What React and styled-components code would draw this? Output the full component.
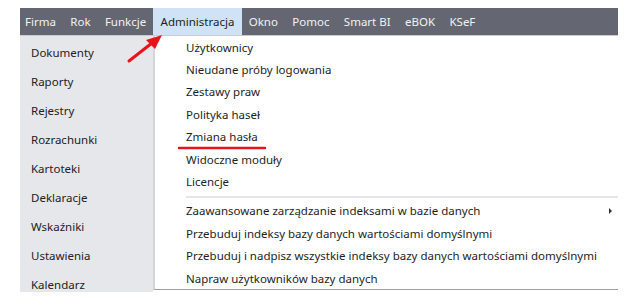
import styled, { createGlobalStyle } from 'styled-components';

const GlobalStyle = createGlobalStyle`
  body {
    margin: 0;
    background: #fff;
    font-family: 'Noto Sans', 'Open Sans', sans-serif;
  }
`;

const Page = styled.div`
  position: relative;
  width: 638px;
  height: 307px;
  padding: 8px 20px 0 20px;
  box-sizing: border-box;
`;

const MenuBar = styled.div`
  display: flex;
  height: 27px;
  background: #646771;
  border-bottom: 1px solid #c9cbd0;
`;

const MenuItem = styled.div`
  display: flex;
  align-items: center;
  padding: 0 7.2px;
  font-size: 11.5px;
  color: ${(p) => (p.$active ? '#1e1e1e' : '#f2f2f2')};
  background: ${(p) => (p.$active ? '#cfe2f6' : 'transparent')};
  &:first-child {
    padding-left: 5px;
  }
`;

const Body = styled.div`
  display: flex;
  align-items: flex-start;
`;

const Sidebar = styled.div`
  width: 133px;
  height: 256px;
  background: #e6e7eb;
  padding-top: 2px;
  box-sizing: border-box;
`;

const SideItem = styled.div`
  height: 29px;
  display: flex;
  align-items: center;
  padding-left: 11px;
  font-size: 11.5px;
  color: #222;
`;

const Dropdown = styled.div`
  flex: 1;
  background: #fff;
  border-left: 2px solid #d4d5d9;
  border-bottom: 1px solid #a0a0a0;
  padding: 0 0 0 31px;
  height: 254px;
  box-sizing: border-box;
`;

const DropItem = styled.div`
  position: relative;
  height: 22.4px;
  display: flex;
  align-items: center;
  font-size: 11.5px;
  color: #1e1e1e;
`;

const Separator = styled.div`
  height: 2px;
  background: #e6e6e6;
  margin: 3px 0 2px 0;
`;

const SubArrow = styled.span`
  position: absolute;
  right: 6px;
  top: 50%;
  margin-top: -3px;
  border-left: 3px solid #333;
  border-top: 3px solid transparent;
  border-bottom: 3px solid transparent;
`;

const Annotation = styled.svg`
  position: absolute;
  left: 0;
  top: 0;
  pointer-events: none;
`;

const topMenu = ['Firma', 'Rok', 'Funkcje', 'Administracja', 'Okno', 'Pomoc', 'Smart BI', 'eBOK', 'KSeF'];
const sideMenu = ['Dokumenty', 'Raporty', 'Rejestry', 'Rozrachunki', 'Kartoteki', 'Deklaracje', 'Wskaźniki', 'Ustawienia', 'Kalendarz'];
const adminItems = ['Użytkownicy', 'Nieudane próby logowania', 'Zestawy praw', 'Polityka haseł', 'Zmiana hasła', 'Widoczne moduły', 'Licencje'];
const dbItems = [
  'Zaawansowane zarządzanie indeksami w bazie danych',
  'Przebuduj indeksy bazy danych wartościami domyślnymi',
  'Przebuduj i nadpisz wszystkie indeksy bazy danych wartościami domyślnymi',
  'Napraw użytkowników bazy danych',
];

const App = () => (
  <Page>
    <GlobalStyle />
    <MenuBar>
      {topMenu.map((m) => (
        <MenuItem key={m} $active={m === 'Administracja'}>
          {m}
        </MenuItem>
      ))}
    </MenuBar>
    <Body>
      <Sidebar>
        {sideMenu.map((s) => (
          <SideItem key={s}>{s}</SideItem>
        ))}
      </Sidebar>
      <Dropdown>
        {adminItems.map((a) => (
          <DropItem key={a}>{a}</DropItem>
        ))}
        <Separator />
        {dbItems.map((d, i) => (
          <DropItem key={d}>
            {d}
            {i === 0 && <SubArrow />}
          </DropItem>
        ))}
      </Dropdown>
    </Body>
    <Annotation width="638" height="307">
      <line x1="129" y1="61" x2="152" y2="43" stroke="#e8141b" strokeWidth="3" strokeLinecap="round" />
      <polygon points="162,35 146,40 155,49" fill="#e8141b" />
      <line x1="179" y1="148" x2="265" y2="148" stroke="#e8141b" strokeWidth="2.5" strokeLinecap="round" />
    </Annotation>
  </Page>
);

export default App;
